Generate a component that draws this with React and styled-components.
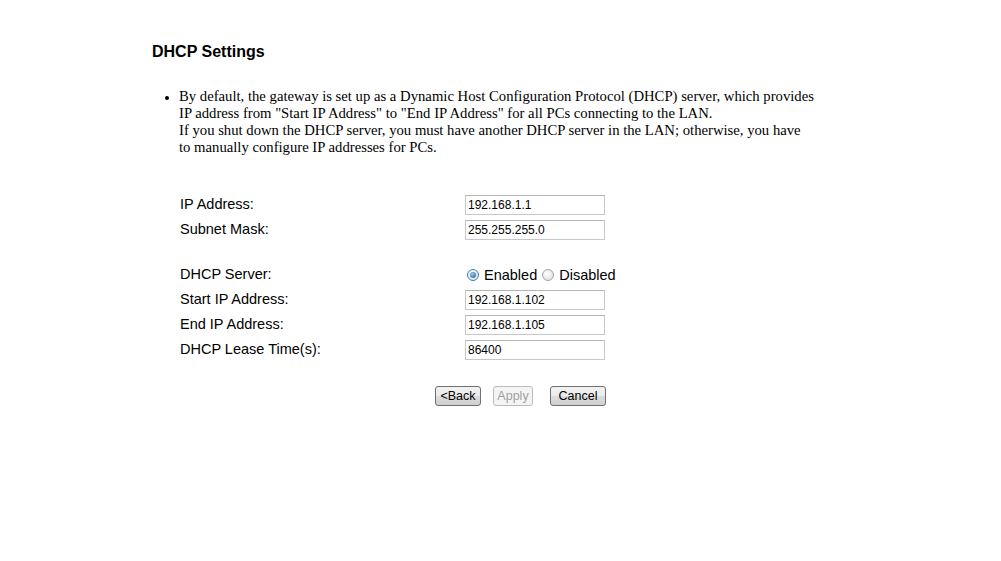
import React from 'react';
import styled, { createGlobalStyle } from 'styled-components';

const GlobalStyle = createGlobalStyle`
  body {
    margin: 0;
    background: #ffffff;
    font-family: "Liberation Sans", Arial, sans-serif;
    color: #000000;
  }
`;

const Page = styled.div`
  padding: 43px 0 0 152px;
  width: 849px;
  height: 518px;
`;

const Title = styled.h1`
  margin: 0;
  font-size: 16px;
  font-weight: bold;
  line-height: 18px;
`;

const Notes = styled.ul`
  margin: 27px 0 0 0;
  padding: 0 0 0 27px;
  white-space: nowrap;
  font-family: "Liberation Serif", "Times New Roman", serif;
  font-size: 14.7px;
  line-height: 17px;
  li::marker {
    font-size: 12px;
  }
`;

const FieldGroup = styled.div`
  margin: ${(p) => p.top}px 0 0 28px;
  display: grid;
  grid-template-columns: 285px 160px;
  grid-auto-rows: 25px;
  align-items: center;
  font-size: 14.5px;
`;

const Label = styled.div`
  line-height: 17px;
`;

const TextBox = styled.input`
  box-sizing: border-box;
  width: 140px;
  height: 20px;
  margin: 0;
  padding: 0 2px;
  border: 1px solid #c8c8c8;
  border-top-color: #b5b5b5;
  font-family: "Liberation Sans", Arial, sans-serif;
  font-size: 12px;
  color: #000;
  outline: none;
`;

const RadioGroup = styled.div`
  display: flex;
  align-items: center;
  margin-left: 2px;
`;

const RadioLabel = styled.label`
  display: flex;
  align-items: center;
  gap: 5px;
  margin-right: 5px;
`;

const RadioDot = styled.span`
  box-sizing: border-box;
  width: 12px;
  height: 12px;
  border-radius: 50%;
  border: 1px solid ${(p) => (p.checked ? '#3c7fb1' : '#a5a5a5')};
  background: radial-gradient(circle at 40% 35%, #ffffff, #d8d8d8);
  display: flex;
  align-items: center;
  justify-content: center;
  &::after {
    content: '';
    display: ${(p) => (p.checked ? 'block' : 'none')};
    width: 6px;
    height: 6px;
    border-radius: 50%;
    background: radial-gradient(circle at 40% 35%, #8fc8f0, #1a5d97);
  }
`;

const Buttons = styled.div`
  display: flex;
  align-items: center;
  margin: 24px 0 0 283px;
`;

const Button = styled.button`
  box-sizing: border-box;
  height: 20px;
  width: ${(p) => p.w}px;
  margin: 0 ${(p) => p.gap || 0}px 0 0;
  padding: 0;
  border: 1px solid ${(p) => (p.disabled ? '#b8bcbf' : '#707070')};
  border-radius: 3px;
  background: ${(p) =>
    p.disabled
      ? '#f4f4f4'
      : 'linear-gradient(to bottom, #f2f2f2 0%, #ebebeb 50%, #dddddd 51%, #cfcfcf 100%)'};
  color: ${(p) => (p.disabled ? '#a0a0a0' : '#000000')};
  font-family: "Liberation Sans", Arial, sans-serif;
  font-size: 12.5px;
  line-height: 18px;
`;

const fields = [
  { label: 'IP Address:', value: '192.168.1.1' },
  { label: 'Subnet Mask:', value: '255.255.255.0' },
];

const dhcpFields = [
  { label: 'Start IP Address:', value: '192.168.1.102' },
  { label: 'End IP Address:', value: '192.168.1.105' },
  { label: 'DHCP Lease Time(s):', value: '86400' },
];

const App = () => {
  return (
    <Page>
      <GlobalStyle />
      <Title>DHCP Settings</Title>
      <Notes>
        <li>
          By default, the gateway is set up as a Dynamic Host Configuration Protocol (DHCP) server, which provides
          <br />
          IP address from "Start IP Address" to "End IP Address" for all PCs connecting to the LAN.
          <br />
          If you shut down the DHCP server, you must have another DHCP server in the LAN; otherwise, you have
          <br />
          to manually configure IP addresses for PCs.
        </li>
      </Notes>
      <FieldGroup top={36}>
        {fields.map((f) => (
          <React.Fragment key={f.label}>
            <Label>{f.label}</Label>
            <TextBox defaultValue={f.value} />
          </React.Fragment>
        ))}
      </FieldGroup>
      <FieldGroup top={20}>
        <Label>DHCP Server:</Label>
        <RadioGroup>
          <RadioLabel>
            <RadioDot checked />
            Enabled
          </RadioLabel>
          <RadioLabel>
            <RadioDot />
            Disabled
          </RadioLabel>
        </RadioGroup>
        {dhcpFields.map((f) => (
          <React.Fragment key={f.label}>
            <Label>{f.label}</Label>
            <TextBox defaultValue={f.value} />
          </React.Fragment>
        ))}
      </FieldGroup>
      <Buttons>
        <Button w={46} gap={12}>&lt;Back</Button>
        <Button w={40} gap={17} disabled>Apply</Button>
        <Button w={56}>Cancel</Button>
      </Buttons>
    </Page>
  );
};

export default App;
